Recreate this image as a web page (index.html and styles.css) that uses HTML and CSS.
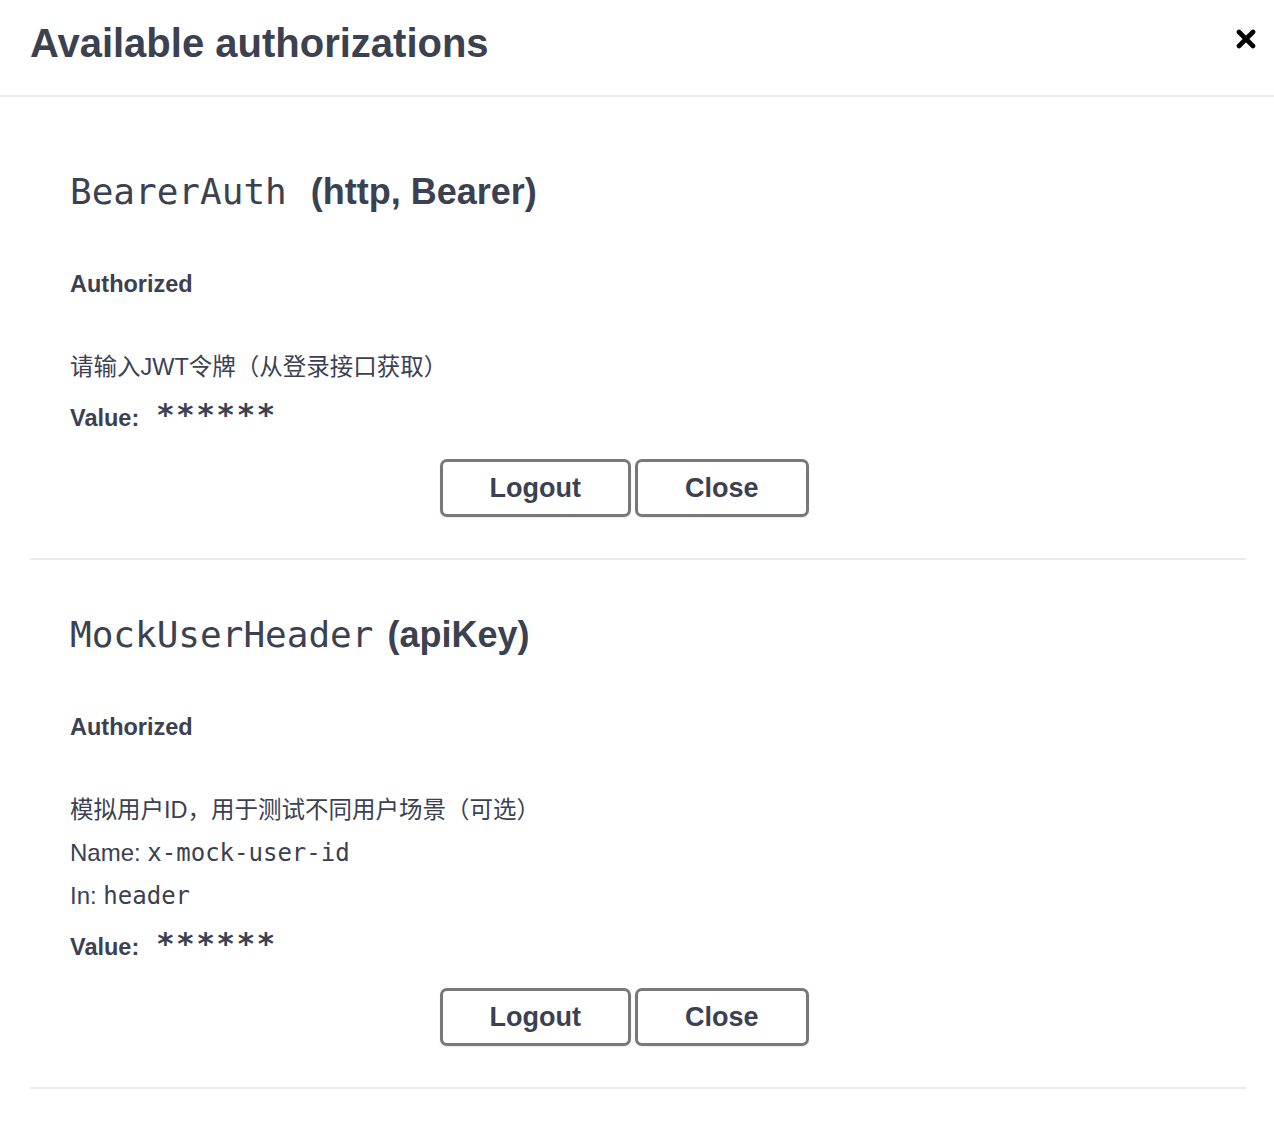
FILE: index.html
```html
<!DOCTYPE html>
<html lang="zh-CN">
<head>
<meta charset="utf-8">
<title>Available authorizations</title>
<link rel="stylesheet" href="styles.css">
</head>
<body>
<div class="modal">
  <div class="modal-header">
    <h3 class="modal-title">Available authorizations</h3>
    <button class="close-modal" aria-label="Close">
      <svg width="20" height="20" viewBox="0 0 20 20"><path d="M3 3 L17 17 M17 3 L3 17" stroke="#000" stroke-width="4.6" stroke-linecap="round" fill="none"/></svg>
    </button>
  </div>
  <div class="modal-body">
    <div class="auth-section">
      <h4 class="auth-title"><code class="scheme-name">BearerAuth</code>&nbsp;&nbsp;(http, Bearer)</h4>
      <h6 class="auth-status">Authorized</h6>
      <p class="auth-desc">请输入JWT令牌（从登录接口获取）</p>
      <div class="auth-value"><label class="value-label">Value:</label><span class="masked">******</span></div>
      <div class="btn-wrapper">
        <button class="btn">Logout</button>
        <button class="btn">Close</button>
      </div>
    </div>
    <div class="auth-section">
      <h4 class="auth-title"><code class="scheme-name">MockUserHeader</code> (apiKey)</h4>
      <h6 class="auth-status">Authorized</h6>
      <p class="auth-desc">模拟用户ID，用于测试不同用户场景（可选）</p>
      <p class="auth-info">Name: <code class="mono">x-mock-user-id</code></p>
      <p class="auth-info">In: <code class="mono">header</code></p>
      <div class="auth-value"><label class="value-label">Value:</label><span class="masked">******</span></div>
      <div class="btn-wrapper">
        <button class="btn">Logout</button>
        <button class="btn">Close</button>
      </div>
    </div>
  </div>
</div>
</body>
</html>
```
FILE: styles.css
```css
html, body {
  margin: 0;
  padding: 0;
  background: #fff;
}

body {
  font-family: "Liberation Sans", "Noto Sans CJK SC", sans-serif;
  color: #3b4151;
}

.modal-header {
  display: flex;
  justify-content: space-between;
  align-items: flex-start;
  height: 97px;
  box-sizing: border-box;
  padding: 19px 18px 0 30px;
  border-bottom: 2px solid #ebebeb;
}

.modal-title {
  margin: 0;
  font-size: 40px;
  line-height: 48px;
  font-weight: 700;
  color: #3b4151;
}

.close-modal {
  margin-top: 10px;
  padding: 0;
  border: none;
  background: none;
  width: 20px;
  height: 20px;
  display: block;
}

.close-modal svg {
  display: block;
}

.modal-body {
  padding: 20px 28px 0 30px;
}

.auth-section {
  padding: 51px 0 41px 40px;
  border-bottom: 2px solid #ebebeb;
}

.auth-title {
  margin: 0;
  font-size: 36px;
  line-height: 48px;
  font-weight: 700;
  color: #3b4151;
}

.scheme-name {
  font-family: "DejaVu Sans Mono", monospace;
  font-weight: 400;
  font-size: 36px;
  margin-right: 4px;
}

.auth-status {
  margin: 52px 0 0;
  font-size: 23.5px;
  line-height: 32px;
  font-weight: 700;
}

.auth-desc {
  margin: 51px 0 0;
  font-size: 23.5px;
  line-height: 32px;
}

.auth-info {
  margin: 11px 0 0;
  font-size: 24px;
  line-height: 32px;
}

.mono {
  font-family: "DejaVu Sans Mono", monospace;
  font-size: 24px;
}

.auth-value {
  margin-top: 19px;
  height: 32px;
  font-size: 23.5px;
  line-height: 32px;
  white-space: nowrap;
}

.value-label {
  font-weight: 700;
}

.masked {
  display: inline-block;
  margin-left: 18px;
  font-family: "DejaVu Sans", sans-serif;
  font-weight: 700;
  font-size: 31px;
  letter-spacing: 3.9px;
  line-height: 0;
  vertical-align: baseline;
  position: relative;
  top: -1px;
}

.btn-wrapper {
  display: flex;
  justify-content: center;
  gap: 4px;
  margin: 25px 68px 0 0;
}

.btn {
  height: 58px;
  box-sizing: border-box;
  padding: 0 47px;
  border: 3px solid #787878;
  border-radius: 7px;
  background: #fff;
  box-shadow: 0 1px 2px rgba(0, 0, 0, 0.1);
  font-family: "Liberation Sans", sans-serif;
  font-size: 27px;
  font-weight: 700;
  color: #3b4151;
}
```
